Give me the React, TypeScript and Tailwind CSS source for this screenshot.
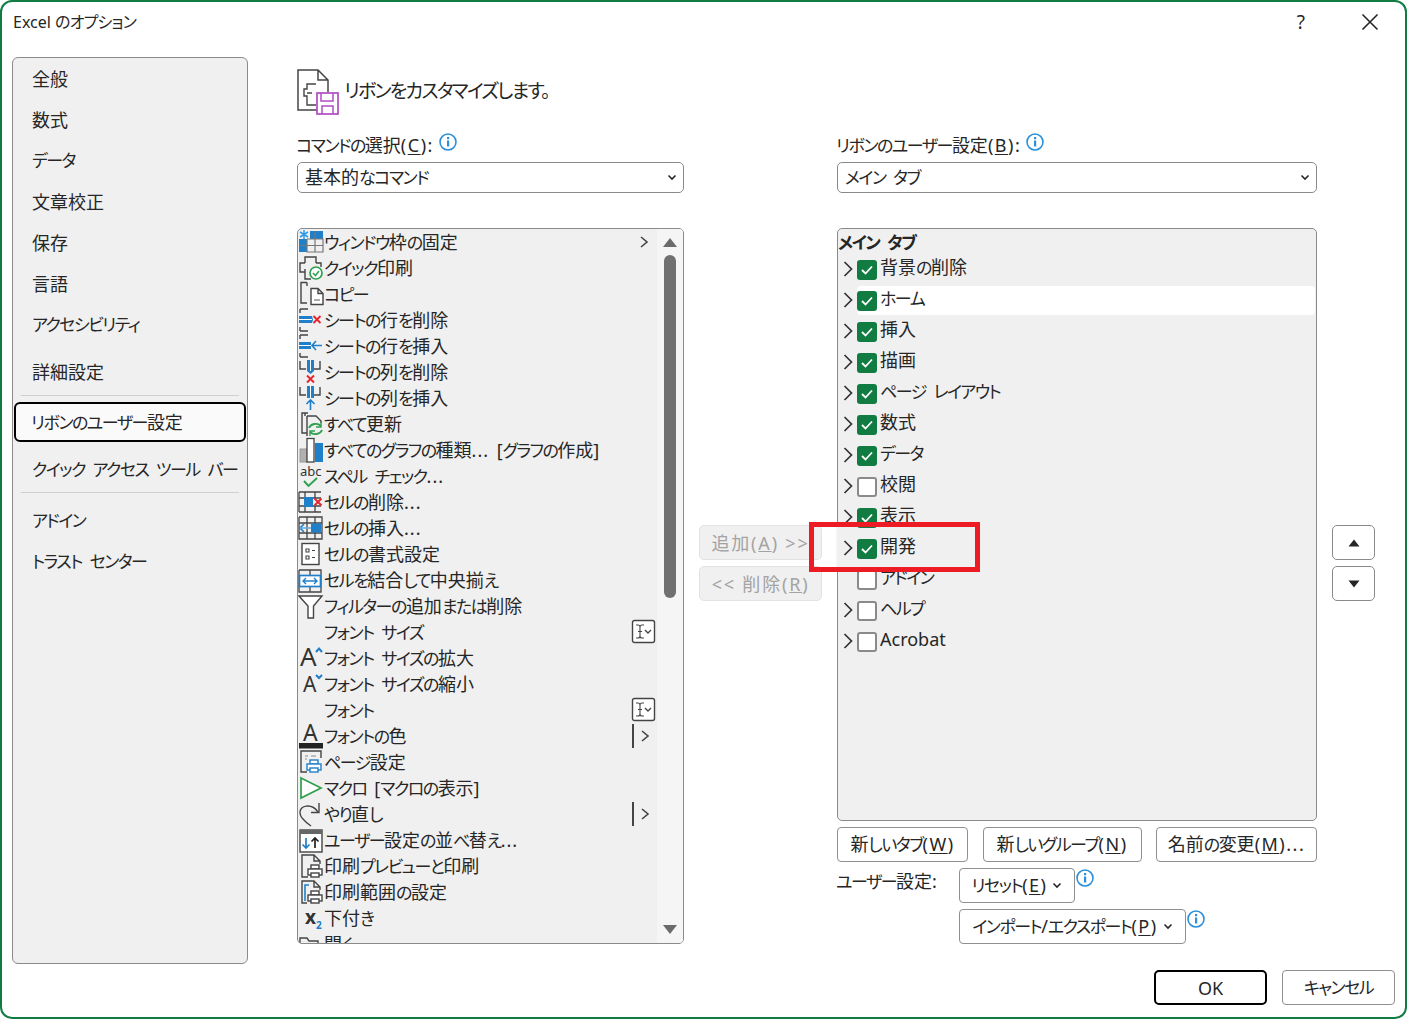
import React from "react";

const D = "#444";
const B = "#1f7fc9";
const G = "#2ea04f";
const R = "#e8242c";

const Jp = ({ t }: { t: string }) => (
  <>
    {t.split(/([\u3040-\u30ff]+|\.\.\.)/).map((p, i) =>
      /^[\u3040-\u30ff]+$/.test(p) ? (
        <span key={i} className="text-[17px] tracking-[-1.5px]">
          {p}
        </span>
      ) : p === "..." ? (
        <span key={i} className="tracking-[1px]">
          {p}
        </span>
      ) : (
        <span key={i}>{p}</span>
      )
    )}
  </>
);

const Info = () => (
  <svg width="20" height="20" viewBox="0 0 20 20" className="shrink-0">
    <circle cx="10" cy="10" r="8" fill="white" stroke="#2b90d9" strokeWidth="1.6" />
    <rect x="9" y="8.5" width="2.2" height="6" fill="#2b90d9" />
    <rect x="9" y="5" width="2.2" height="2.2" fill="#2b90d9" />
  </svg>
);

const SmallChev = () => (
  <svg width="10" height="7" viewBox="0 0 10 7" className="shrink-0">
    <path d="M1.5 1.5 L5 5 L8.5 1.5" fill="none" stroke="#262626" strokeWidth="1.6" />
  </svg>
);

const Mn = ({ pre, k, post }: { pre: string; k: string; post: string }) => (
  <span>
    <Jp t={pre} />
    <span className="tracking-[1.5px]">
      (<u className="underline-offset-2">{k}</u>){post}
    </span>
  </span>
);

const S = ({ children }: { children: React.ReactNode }) => (
  <svg width="26" height="26" viewBox="0 0 26 26" className="shrink-0 overflow-visible">
    {children}
  </svg>
);

const bracketsH = (
  <path d="M2 2 H10 M2 2 V6 M2 24 H10 M2 24 V20" fill="none" stroke={D} strokeWidth="1.4" />
);
const bracketsV = (
  <path d="M2 2 V10 H8 M22 2 V10 H16" fill="none" stroke={D} strokeWidth="1.4" />
);
const cross = (x: number, y: number) => (
  <path d={`M${x - 3.5} ${y - 3.5} L${x + 3.5} ${y + 3.5} M${x + 3.5} ${y - 3.5} L${x - 3.5} ${y + 3.5}`} stroke={R} strokeWidth="1.9" fill="none" />
);
const printer = (x: number, y: number, c: string) => (
  <g fill="white" stroke={c} strokeWidth="1.4">
    <rect x={x + 3} y={y} width="8" height="4" />
    <rect x={x} y={y + 4} width="14" height="6" />
    <rect x={x + 3} y={y + 8} width="8" height="4" />
  </g>
);

const icons: Record<string, React.ReactNode> = {
  freeze: (
    <S>
      <rect x="12" y="2" width="13" height="8" fill={B} />
      <rect x="1" y="10" width="8" height="13" fill={B} />
      <path d="M9 10 H25 V23 H9 V10 M17 2 V23 M9 16.5 H25 M1 16.5 H9" fill="none" stroke="#777" strokeWidth="1.2" />
      <path d="M6 1 V10 M2 3 L10 8 M10 3 L2 8" stroke="#2f9be8" strokeWidth="1.5" />
    </S>
  ),
  quick: (
    <S>
      <path d="M7 8 V2 H18 V8 M7 8 H2 V17 H7 M18 8 H23 V12 M7 14 V24 H13" fill="none" stroke={D} strokeWidth="1.4" />
      <circle cx="18" cy="18" r="6" fill="white" stroke={G} strokeWidth="1.7" />
      <path d="M15 18 L17.5 20.5 L21 16" fill="none" stroke={G} strokeWidth="1.5" />
    </S>
  ),
  copy: (
    <S>
      <path d="M9 1.5 H3 V22 H9 M9 1.5 V5" fill="none" stroke={D} strokeWidth="1.4" />
      <path d="M13 7.5 H20 L25 12.5 V23.5 H13 Z M20 7.5 V12.5 H25" fill="white" stroke={D} strokeWidth="1.4" />
      <path d="M16 19 H22" stroke="#888" strokeWidth="1.4" />
    </S>
  ),
  delrow: (
    <S>
      {bracketsH}
      <path d="M1 9 H14 L15 13 L14 16 H1 Z" fill={B} />
      <path d="M1 12.5 H14" stroke="white" strokeWidth="1" />
      {cross(19, 12.5)}
    </S>
  ),
  insrow: (
    <S>
      {bracketsH}
      <path d="M1 9 H13 V16 H1 Z" fill={B} />
      <path d="M1 12.5 H13" stroke="white" strokeWidth="1" />
      <path d="M24 12.5 H14 M18 8 L14 12.5 L18 17" fill="none" stroke={B} strokeWidth="1.6" />
    </S>
  ),
  delcol: (
    <S>
      {bracketsV}
      <path d="M9 1 H16 V12 L12.5 15 L9 12 Z" fill={B} />
      <path d="M12.5 1 V12" stroke="white" strokeWidth="1" />
      {cross(12.5, 20)}
    </S>
  ),
  inscol: (
    <S>
      {bracketsV}
      <path d="M9 1 H16 V13 H9 Z" fill={B} />
      <path d="M12.5 1 V13" stroke="white" strokeWidth="1" />
      <path d="M12.5 25 V15 M8.5 19 L12.5 15 L16.5 19" fill="none" stroke={B} strokeWidth="1.6" />
    </S>
  ),
  refresh: (
    <S>
      <path d="M10 2 H4 V22 H9 M7 2 V5" fill="none" stroke={D} strokeWidth="1.4" />
      <path d="M9 5 H18 L23 10 V12 M9 5 V25" fill="none" stroke={D} strokeWidth="1.4" />
      <path d="M11 17 A7 6 0 0 1 23 15 M24 19 A7 6 0 0 1 12 21" fill="none" stroke={G} strokeWidth="1.9" />
      <path d="M23 11 V16 H18 M12 25 V20 H17" fill="none" stroke={G} strokeWidth="1.4" />
    </S>
  ),
  chart: (
    <S>
      <rect x="2" y="12" width="7" height="13" fill="#b0b0b0" stroke="#999" />
      <rect x="9" y="1.5" width="7" height="23.5" fill="white" stroke={D} strokeWidth="1.3" />
      <rect x="17" y="6" width="8" height="19" fill={B} />
    </S>
  ),
  abc: (
    <S>
      <text x="2" y="13" fontSize="13" fill="#333" fontFamily="Noto Sans">abc</text>
      <path d="M6 18 L10.5 23 L19 15" fill="none" stroke={G} strokeWidth="1.9" />
    </S>
  ),
  delcell: (
    <S>
      <path d="M1 3 H23 M1 23 H23 M1 9 H23 M1 17 H23 M7 3 V9 M17 3 V9 M7 17 V23 M17 17 V23 M1 3 V23" fill="none" stroke={D} strokeWidth="1.3" />
      <rect x="6" y="8" width="9" height="10" fill={B} />
      {cross(20, 13)}
    </S>
  ),
  inscell: (
    <S>
      <path d="M1 2 H24 V24 H1 V2 M1 8 H24 M1 18 H24 M9 2 V24 M17 2 V24" fill="none" stroke={D} strokeWidth="1.3" />
      <rect x="13" y="8.5" width="10" height="9" fill={B} />
      <path d="M13 13 H2 M6 9 L2 13 L6 17" fill="none" stroke={B} strokeWidth="1.7" />
      <path d="M13 13 H2" stroke="white" strokeWidth="0.6" />
    </S>
  ),
  format: (
    <S>
      <rect x="4" y="2.5" width="17" height="21" fill="white" stroke={D} strokeWidth="1.4" />
      <path d="M8 8 H11 V11 H8 Z M8 15 H11 V18 H8 Z" fill="none" stroke={D} strokeWidth="1.1" />
      <path d="M14 9.5 H17 M14 16.5 H17" stroke={D} strokeWidth="1.2" />
    </S>
  ),
  merge: (
    <S>
      <path d="M1 3 H23 V25 H1 V3 M12 3 V8 M12 20 V25" fill="none" stroke={D} strokeWidth="1.3" />
      <rect x="1.5" y="8.5" width="21" height="11" fill="white" stroke={B} strokeWidth="1.7" />
      <path d="M5 14 H19 M8 11 L5 14 L8 17 M16 11 L19 14 L16 17" fill="none" stroke={B} strokeWidth="1.4" />
    </S>
  ),
  filter: (
    <S>
      <path d="M1 3 H24 L15.5 13 V25 H10 V13 Z" fill="white" stroke={D} strokeWidth="1.4" />
    </S>
  ),
  grow: (
    <S>
      <text x="2" y="21" fontSize="26" fill="#333" fontFamily="Noto Sans">A</text>
      <path d="M18 7 L21 3.5 L24 7" fill="none" stroke={B} strokeWidth="2" />
    </S>
  ),
  shrink: (
    <S>
      <text x="5" y="21" fontSize="21" fill="#333" fontFamily="Noto Sans">A</text>
      <path d="M18 4 L21 7 L24 4" fill="none" stroke={B} strokeWidth="2" />
    </S>
  ),
  color: (
    <S>
      <text x="5" y="18" fontSize="23" fill="#333" fontFamily="Noto Sans">A</text>
      <rect x="1" y="20" width="24" height="5.5" fill="#222" />
    </S>
  ),
  page: (
    <S>
      <path d="M10 2 H3 V23 H9 M3 2 H23 V9" fill="none" stroke={D} strokeWidth="1.4" />
      <path d="M7 7 H10 M7 10 H9 M13 7 H18" stroke="#888" strokeWidth="1.2" />
      {printer(9, 11, B)}
    </S>
  ),
  macro: (
    <S>
      <path d="M3 3 L23 13 L3 23 Z" fill="white" stroke={G} strokeWidth="1.7" />
    </S>
  ),
  redo: (
    <S>
      <path d="M20 11 C14 2 1 4 2 12 C2 16 6 20 13 25" fill="none" stroke={D} strokeWidth="1.4" />
      <path d="M21 2 V11.5 H13" fill="none" stroke={D} strokeWidth="1.4" />
    </S>
  ),
  sort: (
    <S>
      <rect x="2" y="3" width="22" height="22" fill="white" stroke={D} strokeWidth="1.4" />
      <rect x="2" y="3" width="22" height="4" fill="#666" />
      <path d="M8 11 V21 M4.5 17.5 L8 21 L11.5 17.5" fill="none" stroke={B} strokeWidth="1.7" />
      <path d="M17 21 V11 M13.5 14.5 L17 11 L20.5 14.5" fill="none" stroke="#222" strokeWidth="1.7" />
    </S>
  ),
  preview: (
    <S>
      <path d="M10 24 H4 V2 H16 L22 8 V11 M16 2 V8 H22" fill="none" stroke={D} strokeWidth="1.4" />
      {printer(10, 12, D)}
    </S>
  ),
  area: (
    <S>
      <path d="M9 24 H4 V2 H16 L22 8 V11 M16 2 V8 H22" fill="none" stroke={D} strokeWidth="1.4" />
      <path d="M11 6 H7 V22" fill="none" stroke={B} strokeWidth="1.6" />
      {printer(10, 12, D)}
    </S>
  ),
  sub: (
    <S>
      <text x="7" y="19" fontSize="19" fontWeight="700" fill="#333" fontFamily="Noto Sans">x</text>
      <text x="18" y="24" fontSize="10" fontWeight="700" fill={B} fontFamily="Noto Sans">2</text>
    </S>
  ),
  open: (
    <S>
      <path d="M2 22 V7 H9 L11 10 H20 V14 M2 14 H24 L21 24" fill="none" stroke={D} strokeWidth="1.4" />
    </S>
  ),
};

const Combo = () => (
  <svg width="26" height="26" viewBox="0 0 26 26">
    <rect x="1.5" y="1.5" width="22" height="22" rx="2" fill="white" stroke={D} strokeWidth="1.4" />
    <path d="M5 6 H7 Q9 6 9 8 V17 Q9 19 7 19 H5 M13 6 H11 Q9 6 9 8 M9 17 Q9 19 11 19 H13 M7 12.5 H11" fill="none" stroke={D} strokeWidth="1.1" />
    <path d="M14 11 L17 14 L20 11" fill="none" stroke={D} strokeWidth="1.4" />
  </svg>
);

const SubArrow = () => (
  <svg width="12" height="14" viewBox="0 0 12 14">
    <path d="M3 2 L9 7 L3 12" fill="none" stroke={D} strokeWidth="1.6" />
  </svg>
);

const SplitArrow = () => (
  <div className="flex items-center">
    <div className="w-[2px] h-[24px] bg-[#444]" />
    <div className="ml-[5px]">
      <SubArrow />
    </div>
  </div>
);

type Cmd = { t: string; i?: string; r?: "sub" | "combo" | "split" };

const commands: Cmd[] = [
  { t: "ウィンドウ枠の固定", i: "freeze", r: "sub" },
  { t: "クイック印刷", i: "quick" },
  { t: "コピー", i: "copy" },
  { t: "シートの行を削除", i: "delrow" },
  { t: "シートの行を挿入", i: "insrow" },
  { t: "シートの列を削除", i: "delcol" },
  { t: "シートの列を挿入", i: "inscol" },
  { t: "すべて更新", i: "refresh" },
  { t: "すべてのグラフの種類... [グラフの作成]", i: "chart" },
  { t: "スペル チェック...", i: "abc" },
  { t: "セルの削除...", i: "delcell" },
  { t: "セルの挿入...", i: "inscell" },
  { t: "セルの書式設定", i: "format" },
  { t: "セルを結合して中央揃え", i: "merge" },
  { t: "フィルターの追加または削除", i: "filter" },
  { t: "フォント サイズ", r: "combo" },
  { t: "フォント サイズの拡大", i: "grow" },
  { t: "フォント サイズの縮小", i: "shrink" },
  { t: "フォント", r: "combo" },
  { t: "フォントの色", i: "color", r: "split" },
  { t: "ページ設定", i: "page" },
  { t: "マクロ [マクロの表示]", i: "macro" },
  { t: "やり直し", i: "redo", r: "split" },
  { t: "ユーザー設定の並べ替え...", i: "sort" },
  { t: "印刷プレビューと印刷", i: "preview" },
  { t: "印刷範囲の設定", i: "area" },
  { t: "下付き", i: "sub" },
  { t: "開く", i: "open" },
];

const tabs: { t: string; c: boolean; noChev?: boolean; hover?: boolean }[] = [
  { t: "背景の削除", c: true },
  { t: "ホーム", c: true, hover: true },
  { t: "挿入", c: true },
  { t: "描画", c: true },
  { t: "ページ レイアウト", c: true },
  { t: "数式", c: true },
  { t: "データ", c: true },
  { t: "校閲", c: false },
  { t: "表示", c: true },
  { t: "開発", c: true },
  { t: "アドイン", c: false, noChev: true },
  { t: "ヘルプ", c: false },
  { t: "Acrobat", c: false },
];

const navTop = ["全般", "数式", "データ", "文章校正", "保存", "言語", "アクセシビリティ"];

const Chevron = () => (
  <svg width="10" height="16" viewBox="0 0 10 16">
    <path d="M1.5 1 L8.5 8 L1.5 15" fill="none" stroke="#333" strokeWidth="1.7" />
  </svg>
);

const Check = ({ on }: { on: boolean }) =>
  on ? (
    <div className="w-[20px] h-[20px] rounded-[3px] bg-[#107c41] flex items-center justify-center shrink-0">
      <svg width="12" height="10" viewBox="0 0 12 10">
        <path d="M1 5 L4.5 8.5 L11 1.5" fill="none" stroke="white" strokeWidth="1.8" />
      </svg>
    </div>
  ) : (
    <div className="w-[20px] h-[20px] rounded-[3px] bg-white border-2 border-[#8a8a8a] shrink-0" />
  );

const Btn = ({ w, children, className = "" }: { w: string; children: React.ReactNode; className?: string }) => (
  <div className={`${w} h-[35px] shrink-0 rounded-[4px] border border-[#8f8f8f] bg-white flex items-center justify-center gap-[5px] ${className}`}>
    {children}
  </div>
);

const Select = ({ text }: { text: string }) => (
  <div className="h-[31px] rounded-[5px] border border-[#8a8a8a] bg-white flex items-center pl-[7px] pr-[6px] justify-between">
    <span>
      <Jp t={text} />
    </span>
    <SmallChev />
  </div>
);

export default function App() {
  return (
    <div className="w-[1407px] h-[1019px] box-border border-2 border-[#107c41] rounded-[12px] bg-white overflow-hidden relative text-[18px] leading-[26px] text-[#262626] [word-spacing:3px] [font-family:'Noto_Sans','Noto_Sans_CJK_JP',sans-serif] [font-feature-settings:'palt']">
      {/* title bar */}
      <div className="h-[40px] flex items-center pl-[11px] text-[16px] [word-spacing:0px]">
        <span>
          Excel <span className="text-[16px] tracking-[-0.8px]">のオプション</span>
        </span>
        <span className="ml-auto text-[19px] mr-[56px]">?</span>
        <svg width="18" height="18" viewBox="0 0 18 18" className="mr-[26px]">
          <path d="M1.5 1.5 L16.5 16.5 M16.5 1.5 L1.5 16.5" stroke="#262626" strokeWidth="1.6" />
        </svg>
      </div>

      <div className="flex mt-[15px] pl-[10px] items-start">
        {/* navigation */}
        <nav className="w-[236px] h-[907px] box-border rounded-[6px] border border-[#8a8a8a] bg-[#f0f0f0] flex flex-col shrink-0 whitespace-nowrap">
          <div>
            {navTop.map((n) => (
              <div key={n} className="h-[41px] pl-[19px] flex items-center">
                <span>
                  <Jp t={n} />
                </span>
              </div>
            ))}
          </div>
          <div className="h-[47px] pl-[19px] mt-[3px] flex items-center">詳細設定</div>
          <div className="mx-[8px] h-px bg-[#cfcfcf]" />
          <div className="mx-[1px] mt-[6px] h-[40px] box-border rounded-[6px] border-2 border-black bg-[#fafafa] pl-[15px] flex items-center">
            <span>
              <Jp t="リボンのユーザー設定" />
            </span>
          </div>
          <div className="h-[50px] pl-[19px] pt-[4px] flex items-center">
            <span>
              <Jp t="クイック アクセス ツール バー" />
            </span>
          </div>
          <div className="mx-[8px] h-px bg-[#cfcfcf]" />
          <div className="h-[54px] pl-[19px] flex items-center">
            <span>
              <Jp t="アドイン" />
            </span>
          </div>
          <div className="h-[26px] pl-[19px] mt-[1px] flex items-center">
            <span>
              <Jp t="トラスト センター" />
            </span>
          </div>
        </nav>

        {/* main */}
        <main className="ml-[49px] w-[1098px] shrink-0">
          <div className="mt-[12px] h-[45px] flex items-center">
            <svg width="42" height="46" viewBox="0 0 42 46" className="shrink-0">
              <path d="M20 41 H1 V1 H21 L31 11 V23 M21 1 V11 H31" fill="none" stroke="#444" strokeWidth="1.5" />
              <path d="M19 15 H10 V20 H7 V27 H10 V36 H19" fill="none" stroke="#444" strokeWidth="1.4" />
              <path d="M10 24 H15" stroke="#444" strokeWidth="1.4" />
              <rect x="20" y="24" width="21" height="21" fill="white" stroke="#b14cc4" strokeWidth="1.7" />
              <path d="M24 24 V32 H36 V24 M25 45 V37 H36 V45" fill="none" stroke="#b14cc4" strokeWidth="1.5" />
            </svg>
            <span className="ml-[5px] -mt-[1px] text-[19px] tracking-[-1.7px]">リボンをカスタマイズします。</span>
          </div>

          <div className="flex mt-[19px]">
            {/* commands */}
            <div className="w-[387px] shrink-0">
              <div className="h-[29px] flex items-start">
                <span className="-ml-[1px] -mt-[1px]">
                  <Mn pre="コマンドの選択" k="C" post=":" />
                </span>
                <span className="ml-[4px] -mt-[1px]">
                  <Info />
                </span>
              </div>
              <Select text="基本的なコマンド" />
              <div className="mt-[35px] h-[716px] box-border rounded-[5px] border border-[#8a8a8a] bg-[#f0f0f0] flex overflow-hidden">
                <div className="w-[359px] shrink-0 overflow-hidden">
                  {commands.map((c) => (
                    <div key={c.t} className="h-[26px] flex items-center whitespace-nowrap">
                      <div className="w-[26px] h-[26px] shrink-0">{c.i ? icons[c.i] : null}</div>
                      <span>
                        <Jp t={c.t} />
                      </span>
                      <div className="ml-auto w-[26px] h-[26px] shrink-0 flex items-center">
                        {c.r === "sub" && (
                          <div className="ml-[7px]">
                            <SubArrow />
                          </div>
                        )}
                        {c.r === "combo" && <Combo />}
                        {c.r === "split" && (
                          <div className="ml-[1px]">
                            <SplitArrow />
                          </div>
                        )}
                      </div>
                    </div>
                  ))}
                </div>
                <div className="w-[26px] bg-[#f5f5f5] flex flex-col items-center shrink-0">
                  <svg width="16" height="26" viewBox="0 0 16 26" className="shrink-0">
                    <path d="M1 18 L8 9 L15 18 Z" fill="#6b6b6b" />
                  </svg>
                  <div className="w-[12px] h-[343px] rounded-full bg-[#707070]" />
                  <svg width="16" height="26" viewBox="0 0 16 26" className="mt-auto shrink-0">
                    <path d="M1 8 H15 L8 17 Z" fill="#6b6b6b" />
                  </svg>
                </div>
              </div>
            </div>

            {/* add/remove */}
            <div className="w-[153px] shrink-0 pl-[15px] pt-[392px] flex flex-col gap-[6px] text-[#a3a3a3] [word-spacing:0px]">
              <div className="w-[123px] h-[35px] rounded-[5px] border border-[#e2e2e2] bg-[#f0f0f0] flex items-center justify-center">
                <span className="tracking-[1.8px] whitespace-nowrap">
                  追加(<u>A</u>) &gt;&gt;
                </span>
              </div>
              <div className="w-[123px] h-[35px] rounded-[5px] border border-[#e2e2e2] bg-[#f0f0f0] flex items-center justify-center">
                <span className="tracking-[1.8px] whitespace-nowrap">
                  &lt;&lt; 削除(<u>R</u>)
                </span>
              </div>
            </div>

            {/* tabs */}
            <div className="w-[480px] shrink-0">
              <div className="h-[29px] flex items-start">
                <span className="-ml-[1px] -mt-[1px]">
                  <Mn pre="リボンのユーザー設定" k="B" post=":" />
                </span>
                <span className="ml-[4px] -mt-[1px]">
                  <Info />
                </span>
              </div>
              <Select text="メイン タブ" />
              <div className="mt-[35px] h-[593px] box-border rounded-[5px] border border-[#8a8a8a] bg-[#f0f0f0] pr-[1px]">
                <div className="h-[24px] pt-[2px] font-bold flex items-center">
                  <span>
                    <Jp t="メイン タブ" />
                  </span>
                </div>
                {tabs.map((t) => (
                  <div key={t.t} className="h-[31px] flex items-center">
                    <div className="w-[19px] pl-[5px] shrink-0 flex">{t.noChev ? null : <Chevron />}</div>
                    <div className={`flex-1 h-[29px] self-end flex items-center rounded-[4px] ${t.hover ? "bg-white" : ""}`}>
                      <Check on={t.c} />
                      <span className="ml-[3px] -mt-[5px]">
                        <Jp t={t.t} />
                      </span>
                    </div>
                  </div>
                ))}
              </div>

              <div className="mt-[6px] flex justify-between">
                <Btn w="w-[131px]">
                  <Mn pre="新しいタブ" k="W" post="" />
                </Btn>
                <Btn w="w-[159px]">
                  <Mn pre="新しいグループ" k="N" post="" />
                </Btn>
                <Btn w="w-[161px]">
                  <Mn pre="名前の変更" k="M" post="..." />
                </Btn>
              </div>

              <div className="mt-[6px] flex">
                <div className="w-[122px] -ml-[1px] mr-[1px] shrink-0 h-[26px]">
                  <Jp t="ユーザー設定:" />
                </div>
                <div className="flex flex-col gap-[6px]">
                  <div className="flex items-start">
                    <Btn w="w-[116px]">
                      <Mn pre="リセット" k="E" post="" />
                      <SmallChev />
                    </Btn>
                    <Info />
                  </div>
                  <div className="flex items-start">
                    <Btn w="w-[227px]">
                      <Mn pre="インポート/エクスポート" k="P" post="" />
                      <SmallChev />
                    </Btn>
                    <Info />
                  </div>
                </div>
              </div>
            </div>

            {/* move */}
            <div className="ml-[15px] pt-[392px] flex flex-col gap-[6px]">
              <div className="w-[43px] h-[35px] rounded-[5px] border border-[#8a8a8a] bg-white flex items-center justify-center">
                <svg width="12" height="8" viewBox="0 0 12 8">
                  <path d="M0.5 7.5 L6 0.5 L11.5 7.5 Z" fill="#262626" />
                </svg>
              </div>
              <div className="w-[43px] h-[35px] rounded-[5px] border border-[#8a8a8a] bg-white flex items-center justify-center">
                <svg width="12" height="8" viewBox="0 0 12 8">
                  <path d="M0.5 0.5 H11.5 L6 7.5 Z" fill="#262626" />
                </svg>
              </div>
            </div>
          </div>

          {/* footer */}
          <div className="mt-[26px] flex justify-end gap-[15px]">
            <div className="w-[113px] h-[35px] box-border rounded-[5px] border-2 border-black bg-white flex items-center justify-center">
              OK
            </div>
            <Btn w="w-[113px]">
              <span>
                <Jp t="キャンセル" />
              </span>
            </Btn>
          </div>
        </main>
      </div>

      {/* annotation over the dialog */}
      <div className="absolute left-[834px] top-[525px] w-[2px] h-[45px] bg-[#f4f4f4]" />
      <div className="absolute left-[807px] top-[520px] w-[171px] h-[50px] box-border border-[5px] border-[#ed1c24]" />
    </div>
  );
}
